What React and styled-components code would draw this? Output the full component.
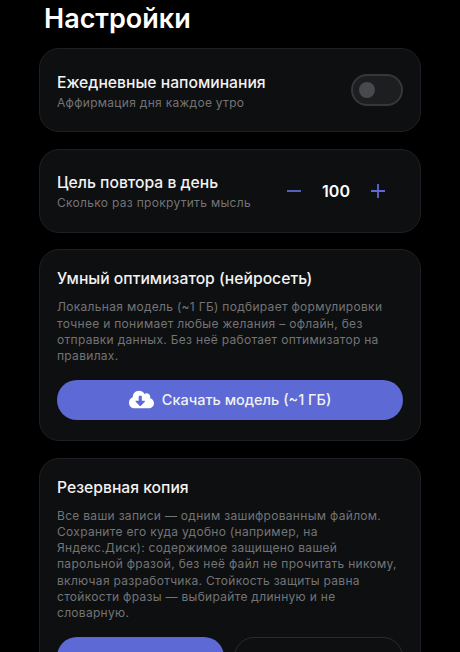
import React from 'react';
import styled, { createGlobalStyle } from 'styled-components';
import { FaCloudDownloadAlt } from 'react-icons/fa';

const GlobalStyle = createGlobalStyle`
  html, body {
    margin: 0;
    height: 100%;
    overflow: hidden;
    background: #000;
    font-family: Inter, "Noto Sans", sans-serif;
  }
`;

const Page = styled.div`
  height: 652px;
  overflow: hidden;
  padding: 0 39px;
  box-sizing: border-box;
`;

const Title = styled.h1`
  margin: 0 0 10.3px 5px;
  height: 38px;
  font-size: 27px;
  line-height: 37px;
  font-weight: 600;
  color: #fff;
`;

const Stack = styled.div`
  display: flex;
  flex-direction: column;
  gap: 16.8px;
`;

const Card = styled.section`
  box-sizing: border-box;
  padding: 19px 17px 20.5px;
  background: #0e0f10;
  border: 1px solid #1f2023;
  border-radius: 20px;
`;

const RowCard = styled(Card)`
  height: 83.8px;
  padding: 0 17px;
  display: flex;
  align-items: center;
  justify-content: space-between;
`;

const RowText = styled.div`
  padding-top: 3px;
`;

const Label = styled.div`
  font-size: 15.7px;
  line-height: 20px;
  font-weight: 500;
  color: #f2f2f3;
`;

const Hint = styled.div`
  margin-top: 1px;
  font-size: 12px;
  line-height: 17px;
  letter-spacing: 0.3px;
  color: #737477;
`;

const Toggle = styled.div`
  box-sizing: border-box;
  width: 52px;
  height: 32px;
  padding: 0 6px;
  display: flex;
  align-items: center;
  background: #1d1e20;
  border: 2px solid #36373a;
  border-radius: 16px;
`;

const Knob = styled.span`
  width: 16px;
  height: 16px;
  border-radius: 50%;
  background: #48494d;
`;

const Stepper = styled.div`
  display: flex;
  align-items: center;
  gap: 18px;
  margin: 1px 17px 0 0;
`;

const StepButton = styled.span`
  display: flex;
  color: #5d69d4;
`;

const Value = styled.span`
  width: 32px;
  text-align: center;
  font-size: 16px;
  font-weight: 600;
  color: #fff;
`;

const Text = styled.p`
  margin: 10px 0 0;
  font-size: 12px;
  line-height: 16.1px;
  letter-spacing: 0.3px;
  color: #737477;
`;

const Button = styled.div`
  flex: 1;
  box-sizing: border-box;
  height: 40px;
  display: flex;
  align-items: center;
  justify-content: center;
  gap: 8px;
  border-radius: 20px;
  font-size: 14.5px;
  font-weight: 500;
  color: #f2f2f3;
  background: ${({ $outline }) => ($outline ? 'transparent' : '#5d69d4')};
  border: ${({ $outline }) => ($outline ? '1px solid #2a2b2e' : 'none')};
`;

const FullButton = styled(Button)`
  margin-top: 16px;
`;

const ButtonRow = styled.div`
  display: flex;
  gap: 10px;
  margin-top: 16px;
`;

const Minus = () => (
  <svg width="16" height="16" viewBox="0 0 16 16" fill="none" stroke="currentColor" strokeWidth="1.8">
    <path d="M1 8h14" />
  </svg>
);

const Plus = () => (
  <svg width="16" height="16" viewBox="0 0 16 16" fill="none" stroke="currentColor" strokeWidth="1.8">
    <path d="M1 8h14M8 1v14" />
  </svg>
);

const App = () => {
  return (
    <Page>
      <GlobalStyle />
      <Title>Настройки</Title>
      <Stack>
        <RowCard>
          <RowText>
            <Label>Ежедневные напоминания</Label>
            <Hint>Аффирмация дня каждое утро</Hint>
          </RowText>
          <Toggle>
            <Knob />
          </Toggle>
        </RowCard>
        <RowCard>
          <RowText>
            <Label>Цель повтора в день</Label>
            <Hint>Сколько раз прокрутить мысль</Hint>
          </RowText>
          <Stepper>
            <StepButton><Minus /></StepButton>
            <Value>100</Value>
            <StepButton><Plus /></StepButton>
          </Stepper>
        </RowCard>
        <Card>
          <Label>Умный оптимизатор (нейросеть)</Label>
          <Text>
            Локальная модель (~1 ГБ) подбирает формулировки точнее и понимает любые желания – офлайн, без
            отправки данных. Без неё работает оптимизатор на правилах.
          </Text>
          <FullButton>
            <FaCloudDownloadAlt size={25} color="#fff" />
            Скачать модель (~1 ГБ)
          </FullButton>
        </Card>
        <Card>
          <Label>Резервная копия</Label>
          <Text>
            Все ваши записи — одним зашифрованным файлом. Сохраните его куда удобно (например, на
            Яндекс.Диск): содержимое защищено вашей парольной фразой, без неё файл не прочитать никому,
            включая разработчика. Стойкость защиты равна стойкости фразы — выбирайте длинную и не словарную.
          </Text>
          <ButtonRow>
            <Button />
            <Button $outline />
          </ButtonRow>
        </Card>
      </Stack>
    </Page>
  );
};

export default App;
